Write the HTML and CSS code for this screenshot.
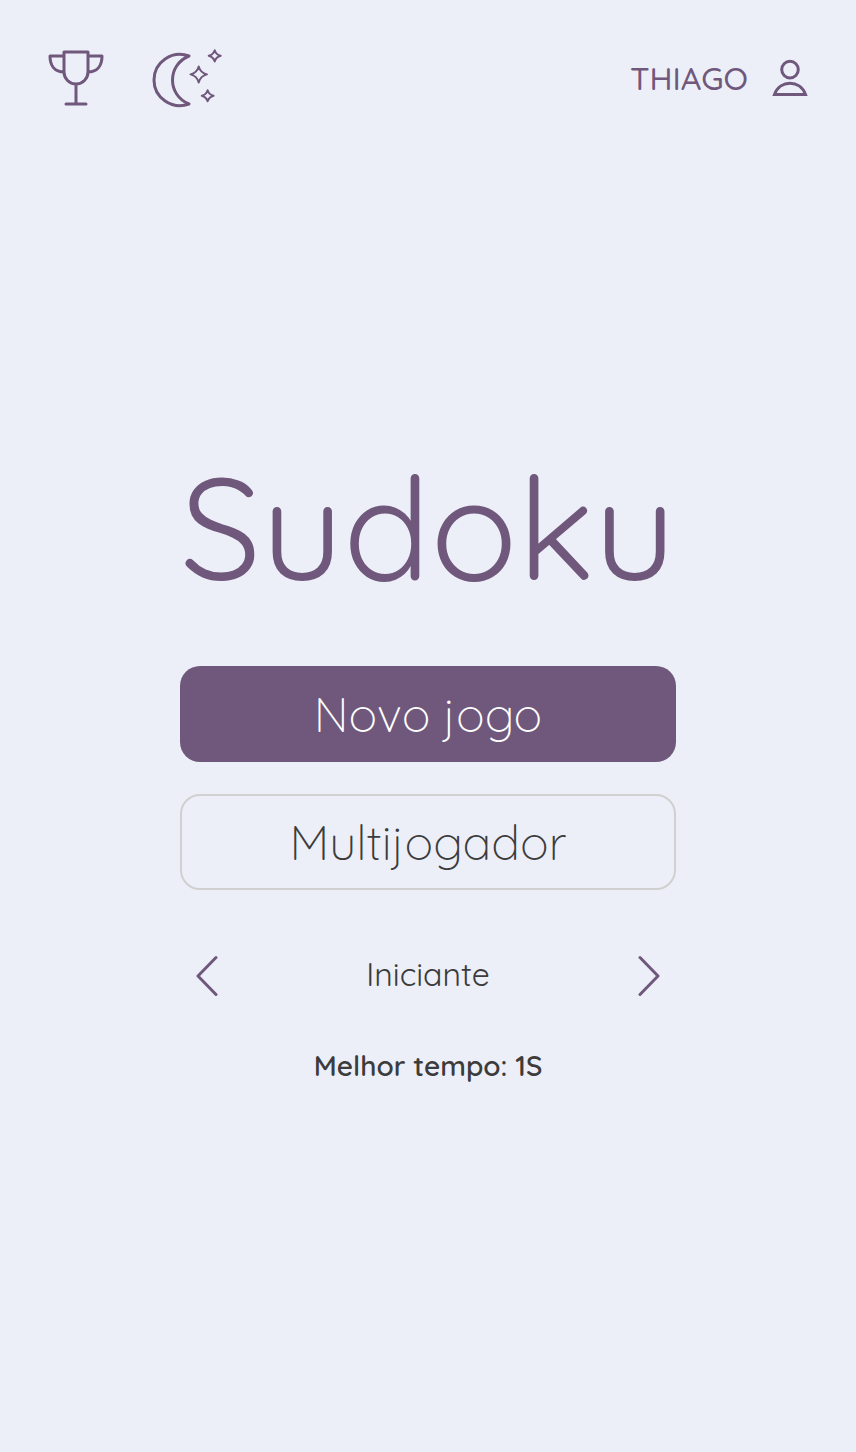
FILE: index.html
```html
<!DOCTYPE html>
<html lang="pt-BR">
<head>
<meta charset="utf-8">
<title>Sudoku</title>
<link rel="stylesheet" href="styles.css">
</head>
<body>
<header class="topbar">
  <nav class="tools">
    <svg class="icon" width="56" height="58" viewBox="48 49 56 58">
      <path d="M64 52H88V72A12 12 0 0 1 64 72ZM76 84V104M66 104H86M64 56H50C50 66 55 72 64 72M88 56H102C102 66 97 72 88 72"/>
    </svg>
    <svg class="icon" width="72" height="62" viewBox="151 47 72 62">
      <path d="M189 56C167 65 167 95 189 104C172 110 154 98 154 80C154 62 172 50 189 56Z"/>
      <path class="star" d="M198.700 66.500Q200.500 73 207 74.400Q200.500 76 198.700 82.500Q197 76 190.500 74.400Q197 73 198.700 66.500ZM214.700 50.200Q216 54.700 220.700 55.800Q216 57 214.700 61.500Q213.300 57 208.700 55.800Q213.300 54.700 214.700 50.200ZM207.600 90.200Q209 94.600 213.600 95.700Q209 97 207.600 101.200Q206.300 97 201.800 95.700Q206.300 94.600 207.600 90.200Z"/>
    </svg>
  </nav>
  <div class="account">
    <span class="user">THIAGO</span>
    <svg class="icon" width="36" height="38" viewBox="772 59 36 38">
      <circle cx="790" cy="69.600" r="8.300"/>
      <path class="shoulders" d="M774.500 94.500C780 79.500 800 79.500 805.500 94.500Z"/>
    </svg>
  </div>
</header>
<main class="home">
  <h1 class="title">Sudoku</h1>
  <button class="button primary">Novo jogo</button>
  <button class="button outline">Multijogador</button>
  <div class="level">
    <svg class="icon" width="24" height="44" viewBox="0 0 24 44"><path d="M20 3.500L2 22L20 40.500"/></svg>
    <span class="level-name">Iniciante</span>
    <svg class="icon" width="24" height="44" viewBox="0 0 24 44"><path d="M4 3.500L22 22L4 40.500"/></svg>
  </div>
  <p class="best">Melhor tempo: 1S</p>
</main>
</body>
</html>
```
FILE: styles.css
```css
* { box-sizing: border-box; }
body {
  margin: 0;
  min-height: 1452px;
  background: #eceff8;
  color: #3c3c3c;
  font-family: Quicksand, Lato, sans-serif;
}
.icon {
  display: block;
  flex: none;
  fill: none;
  stroke: #70587c;
  stroke-width: 3;
  stroke-linecap: round;
  stroke-linejoin: round;
}
.star { stroke-width: 2; }
.shoulders { stroke-linejoin: miter; }
.topbar {
  display: flex;
  justify-content: space-between;
  align-items: center;
  height: 156px;
  padding: 0 48px;
}
.tools { display: flex; align-items: center; gap: 47px; }
.account { display: flex; align-items: center; gap: 24px; }
.user { color: #70587c; font-size: 32px; font-weight: 500; line-height: 40px; white-space: nowrap; }
.home { width: 496px; margin: 280px auto 0; }
.title {
  height: 180px;
  margin: 0 0 50px;
  color: #70587c;
  font-size: 144px;
  line-height: 180px;
  font-weight: 400;
  text-align: center;
  white-space: nowrap;
}
.button {
  display: flex;
  align-items: center;
  justify-content: center;
  width: 496px;
  height: 96px;
  margin: 0 0 32px;
  padding: 0;
  border: 0;
  border-radius: 20px;
  font: 300 48px/96px Quicksand, Lato, sans-serif;
}
.primary { background: #70587c; color: #fff; }
.outline { border: 2px solid #d0d0d0; background: transparent; color: #3c3c3c; }
.level {
  display: flex;
  align-items: center;
  justify-content: space-between;
  height: 44px;
  margin-top: 64px;
  padding: 0 16px;
}
.level-name { font-size: 32px; font-weight: 400; line-height: 40px; padding-bottom: 4px; }
.best {
  margin: 48px 0 0;
  text-align: center;
  font-size: 28px;
  line-height: 40px;
  font-weight: 600;
}
```
